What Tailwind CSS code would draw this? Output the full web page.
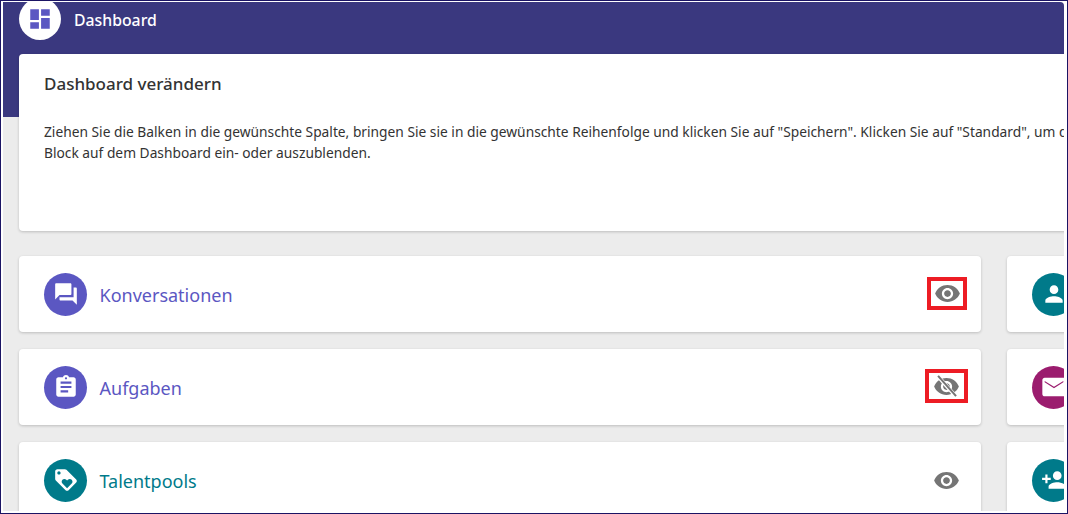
<!doctype html>
<html><head><meta charset="utf-8"><script src="https://cdn.jsdelivr.net/npm/@tailwindcss/browser@4"></script></head>
<body class="m-0 bg-white">
<div class="w-[1068px] h-[514px] overflow-hidden border border-[#1b1464] bg-white font-['Noto_Sans',sans-serif]">
<div class="w-[1061px] h-[509px] overflow-hidden bg-[#ececec] ml-[2px] mt-px relative rounded-tr-sm">
  <div class="h-[115px] bg-[#3a387f] absolute top-0 left-0 right-0"></div>
  <div class="relative">
    <div class="h-[52px] flex items-start pl-[16px] gap-[13px]">
      <div class="w-[42px] h-[42px] rounded-full bg-white flex items-center justify-center mt-[-4px]">
        <svg width="26" height="26" viewBox="0 0 24 24" fill="#5b57c2"><path d="M3 13h8V3H3v10zm0 8h8v-6H3v6zm10 0h8V11h-8v10zm0-18v6h8V3h-8z"/></svg>
      </div>
      <span class="text-white text-[15.8px] leading-6 font-medium mt-[6px]">Dashboard</span>
    </div>
    <div class="ml-[16px] w-[1100px] h-[177px] bg-white rounded shadow-[0_1px_3px_rgba(0,0,0,0.2)] pt-[19px] pl-[25px]">
      <h2 class="text-[17px] leading-[22px] text-[#333] font-medium">Dashboard verändern</h2>
      <p class="mt-[26px] text-[13.77px] leading-[21px] text-[#333] w-[1060px]">Ziehen Sie die Balken in die gewünschte Spalte, bringen Sie sie in die gewünschte Reihenfolge und klicken Sie auf "Speichern". Klicken Sie auf "Standard", um die<br>Block auf dem Dashboard ein- oder auszublenden.</p>
    </div>
    <div class="ml-[16px] mt-[25px] flex gap-[26px] w-[1100px]">
      <div class="w-[962px] shrink-0 flex flex-col gap-[17px]">
        <div class="h-[76px] bg-white rounded shadow-[0_1px_3px_rgba(0,0,0,0.2)] flex items-center pl-[25px] gap-[12.5px] relative">
          <div class="w-[43px] h-[43px] rounded-full bg-[#5b57c2] flex items-center justify-center"><svg width="26" height="26" viewBox="0 0 24 24" fill="#fff"><path d="M21 6h-2v9H6v2c0 .55.45 1 1 1h11l4 4V7c0-.55-.45-1-1-1zm-4 6V3c0-.55-.45-1-1-1H3c-.55 0-1 .45-1 1v14l4-4h10c.55 0 1-.45 1-1z"/></svg></div>
          <span class="text-lg text-[#5b57c2] mt-px">Konversationen</span>
          <div class="absolute left-[908px] top-[21px] w-[40px] h-[33px] border-[4px] border-[#ed1c24] flex items-center justify-center"><svg class="shrink-0" width="27" height="27" viewBox="0 0 24 24" fill="#757575"><path d="M12 4.5C7 4.5 2.73 7.61 1 12c1.73 4.39 6 7.5 11 7.5s9.27-3.11 11-7.5c-1.73-4.39-6-7.5-11-7.5zM12 17c-2.76 0-5-2.24-5-5s2.24-5 5-5 5 2.24 5 5-2.24 5-5 5zm0-8c-1.66 0-3 1.34-3 3s1.34 3 3 3 3-1.34 3-3-1.34-3-3-3z"/></svg></div>
        </div>
        <div class="h-[76px] bg-white rounded shadow-[0_1px_3px_rgba(0,0,0,0.2)] flex items-center pl-[25px] gap-[12.5px] relative">
          <div class="w-[43px] h-[43px] rounded-full bg-[#5b57c2] flex items-center justify-center"><svg width="26" height="26" viewBox="0 0 24 24" fill="#fff"><path d="M19 3h-4.18C14.4 1.84 13.3 1 12 1c-1.3 0-2.4.84-2.82 2H5c-1.1 0-2 .9-2 2v14c0 1.1.9 2 2 2h14c1.1 0 2-.9 2-2V5c0-1.1-.9-2-2-2zm-7 0c.55 0 1 .45 1 1s-.45 1-1 1-1-.45-1-1 .45-1 1-1zm2 14H7v-2h7v2zm3-4H7v-2h10v2zm0-4H7V7h10v2z"/></svg></div>
          <span class="text-lg text-[#5b57c2] mt-px">Aufgaben</span>
          <div class="absolute left-[906px] top-[20px] w-[43px] h-[34px] border-[4px] border-[#ed1c24] flex items-center justify-center"><svg class="shrink-0" width="27" height="27" viewBox="0 0 24 24" fill="#757575"><path d="M12 4.5C7 4.5 2.73 7.61 1 12c1.73 4.39 6 7.5 11 7.5s9.27-3.11 11-7.5c-1.73-4.39-6-7.5-11-7.5zM12 17c-2.76 0-5-2.24-5-5s2.24-5 5-5 5 2.24 5 5-2.24 5-5 5zm0-8c-1.66 0-3 1.34-3 3s1.34 3 3 3 3-1.34 3-3-1.34-3-3-3z"/><path d="M4 2.5 L20 20.5" stroke="#fff" stroke-width="3.4"/><path d="M4.5 2.5 L20.5 20.5" stroke="#757575" stroke-width="1.8"/></svg></div>
        </div>
        <div class="h-[76px] bg-white rounded shadow-[0_1px_3px_rgba(0,0,0,0.2)] flex items-center pl-[25px] gap-[12.5px] relative">
          <div class="w-[43px] h-[43px] rounded-full bg-[#007a8a] flex items-center justify-center"><svg width="26" height="26" viewBox="0 0 24 24" fill="#fff"><path d="M21.41 11.58l-9-9C12.05 2.22 11.55 2 11 2H4c-1.1 0-2 .9-2 2v7c0 .55.22 1.05.59 1.42l9 9c.36.36.86.58 1.41.58s1.05-.22 1.41-.59l7-7c.37-.36.59-.86.59-1.41s-.23-1.06-.59-1.42zM5.5 7C4.67 7 4 6.33 4 5.5S4.67 4 5.5 4 7 4.67 7 5.5 6.33 7 5.5 7zm11.77 8.27L13 19.54l-4.27-4.27C8.28 14.81 8 14.19 8 13.5c0-1.38 1.12-2.5 2.5-2.5.69 0 1.32.28 1.77.74l.73.72.73-.73c.45-.45 1.08-.73 1.77-.73 1.38 0 2.5 1.12 2.5 2.5 0 .69-.28 1.32-.73 1.77z"/></svg></div>
          <span class="text-lg text-[#007a8a] mt-px">Talentpools</span>
          <div class="absolute left-[914px] top-[25px] flex"><svg width="27" height="27" viewBox="0 0 24 24" fill="#757575"><path d="M12 4.5C7 4.5 2.73 7.61 1 12c1.73 4.39 6 7.5 11 7.5s9.27-3.11 11-7.5c-1.73-4.39-6-7.5-11-7.5zM12 17c-2.76 0-5-2.24-5-5s2.24-5 5-5 5 2.24 5 5-2.24 5-5 5zm0-8c-1.66 0-3 1.34-3 3s1.34 3 3 3 3-1.34 3-3-1.34-3-3-3z"/></svg></div>
        </div>
      </div>
      <div class="w-[100px] shrink-0 flex flex-col gap-[17px]">
        <div class="h-[76px] bg-white rounded shadow-[0_1px_3px_rgba(0,0,0,0.2)] flex items-center pl-[25px]"><div class="w-[43px] h-[43px] shrink-0 rounded-full bg-[#007a8a] flex items-center justify-center"><svg width="26" height="26" viewBox="0 0 24 24" fill="#fff"><path d="M12 12c2.21 0 4-1.79 4-4s-1.79-4-4-4-4 1.79-4 4 1.79 4 4 4zm0 2c-2.67 0-8 1.34-8 4v2h16v-2c0-2.66-5.33-4-8-4z"/></svg></div></div>
        <div class="h-[76px] bg-white rounded shadow-[0_1px_3px_rgba(0,0,0,0.2)] flex items-center pl-[25px]"><div class="w-[43px] h-[43px] shrink-0 rounded-full bg-[#9b1c6e] flex items-center justify-center"><svg width="28" height="28" viewBox="0 0 24 24" fill="#fff"><path d="M20 4H4c-1.1 0-1.99.9-1.99 2L2 18c0 1.1.9 2 2 2h16c1.1 0 2-.9 2-2V6c0-1.1-.9-2-2-2zm0 4l-8 5-8-5V6.8l8 5 8-5V8z"/></svg></div></div>
        <div class="h-[76px] bg-white rounded shadow-[0_1px_3px_rgba(0,0,0,0.2)] flex items-center pl-[25px]"><div class="w-[43px] h-[43px] shrink-0 rounded-full bg-[#007a8a] flex items-center justify-center"><svg width="26" height="26" viewBox="0 0 24 24" fill="#fff"><path d="M15 12c2.21 0 4-1.79 4-4s-1.79-4-4-4-4 1.79-4 4 1.79 4 4 4zm-9-2V7H4v3H1v2h3v3h2v-3h3v-2H6zm9 4c-2.67 0-8 1.34-8 4v2h16v-2c0-2.66-5.33-4-8-4z"/></svg></div></div>
      </div>
    </div>
  </div>
</div>
</div>
</body></html>
